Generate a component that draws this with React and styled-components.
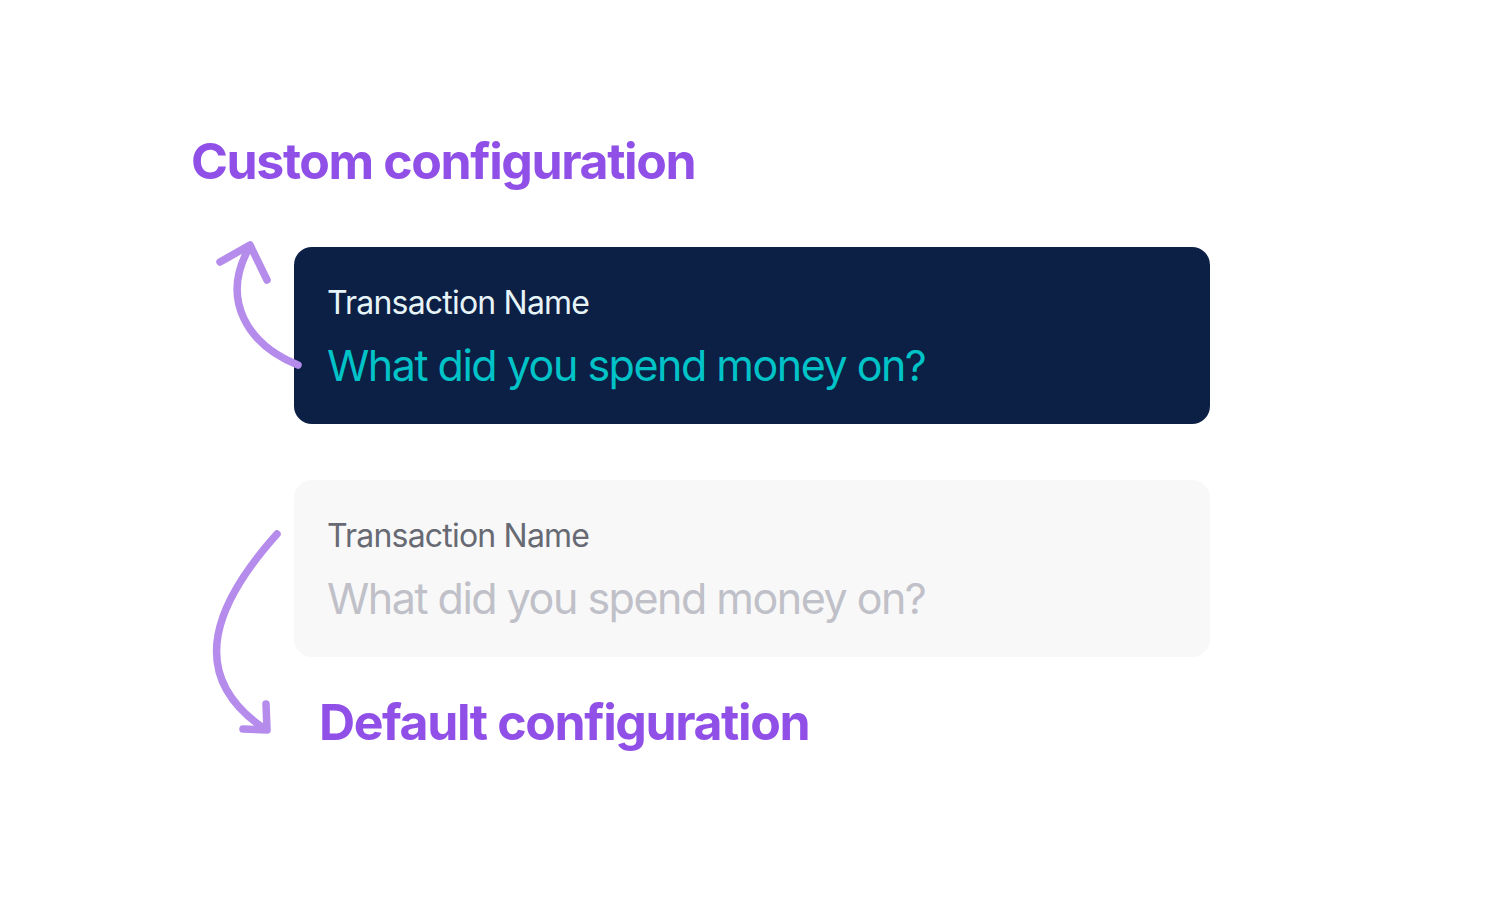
import React from "react";
import styled, { createGlobalStyle } from "styled-components";

const Global = createGlobalStyle`
  html, body { margin: 0; padding: 0; background: #ffffff; }
  body { font-family: Inter, "Noto Sans", sans-serif; -webkit-font-smoothing: antialiased; }
`;

const Page = styled.div`
  position: relative;
  width: 1501px;
  height: 901px;
  box-sizing: border-box;
  padding: 129px 0 0 191px;
  display: flex;
  flex-direction: column;
  align-items: flex-start;
`;

const Heading = styled.h2`
  margin: ${(p) => p.$top || 0}px 0 0 ${(p) => p.$indent || 0}px;
  font-family: Inter, sans-serif;
  font-weight: 700;
  font-size: 50px;
  line-height: 64px;
  letter-spacing: -1.4px;
  color: #9050e8;
`;

const Card = styled.div`
  box-sizing: border-box;
  margin-left: 103px;
  width: 916px;
  height: 177px;
  border-radius: 18px;
  padding: 36px 33px 0;
  display: flex;
  flex-direction: column;
  gap: 15px;
  background: ${(p) => (p.$dark ? "#0c1f45" : "#f8f8f9")};
`;

const Label = styled.div`
  font-family: Inter, sans-serif;
  font-size: 32px;
  line-height: 40px;
  letter-spacing: -0.8px;
  color: ${(p) => (p.$dark ? "#e6f4f8" : "#676a73")};
`;

const Value = styled.div`
  font-family: Inter, sans-serif;
  font-size: 43px;
  line-height: 54px;
  letter-spacing: -1.5px;
  color: ${(p) => (p.$dark ? "#00c3c8" : "#c0c0c8")};
`;

const Stack = styled.div`
  display: flex;
  flex-direction: column;
  gap: 56px;
  margin-top: 54px;
`;

const Annotations = styled.svg`
  position: absolute;
  left: 0;
  top: 0;
  width: 1501px;
  height: 901px;
  pointer-events: none;
`;

function Field({ dark }) {
  return (
    <Card $dark={dark}>
      <Label $dark={dark}>Transaction Name</Label>
      <Value $dark={dark}>What did you spend money on?</Value>
    </Card>
  );
}

export default function App() {
  return (
    <>
      <Global />
      <Page>
        <Heading>Custom configuration</Heading>
        <Stack>
          <Field dark />
          <Field />
        </Stack>
        <Heading $indent={128} $top={33}>Default configuration</Heading>
        <Annotations viewBox="0 0 1501 901">
          <g fill="none" stroke="#b58ceb" strokeWidth="7.5" strokeLinecap="round" strokeLinejoin="round">
            <path d="M298 365 C 248 345 220 300 249 248" />
            <path d="M220 262 L250 245 L267 280" />
            <path d="M277 534 C 218 600 184 672 262 727" />
            <path d="M266 704 L267 730 L243 729" />
          </g>
        </Annotations>
      </Page>
    </>
  );
}
